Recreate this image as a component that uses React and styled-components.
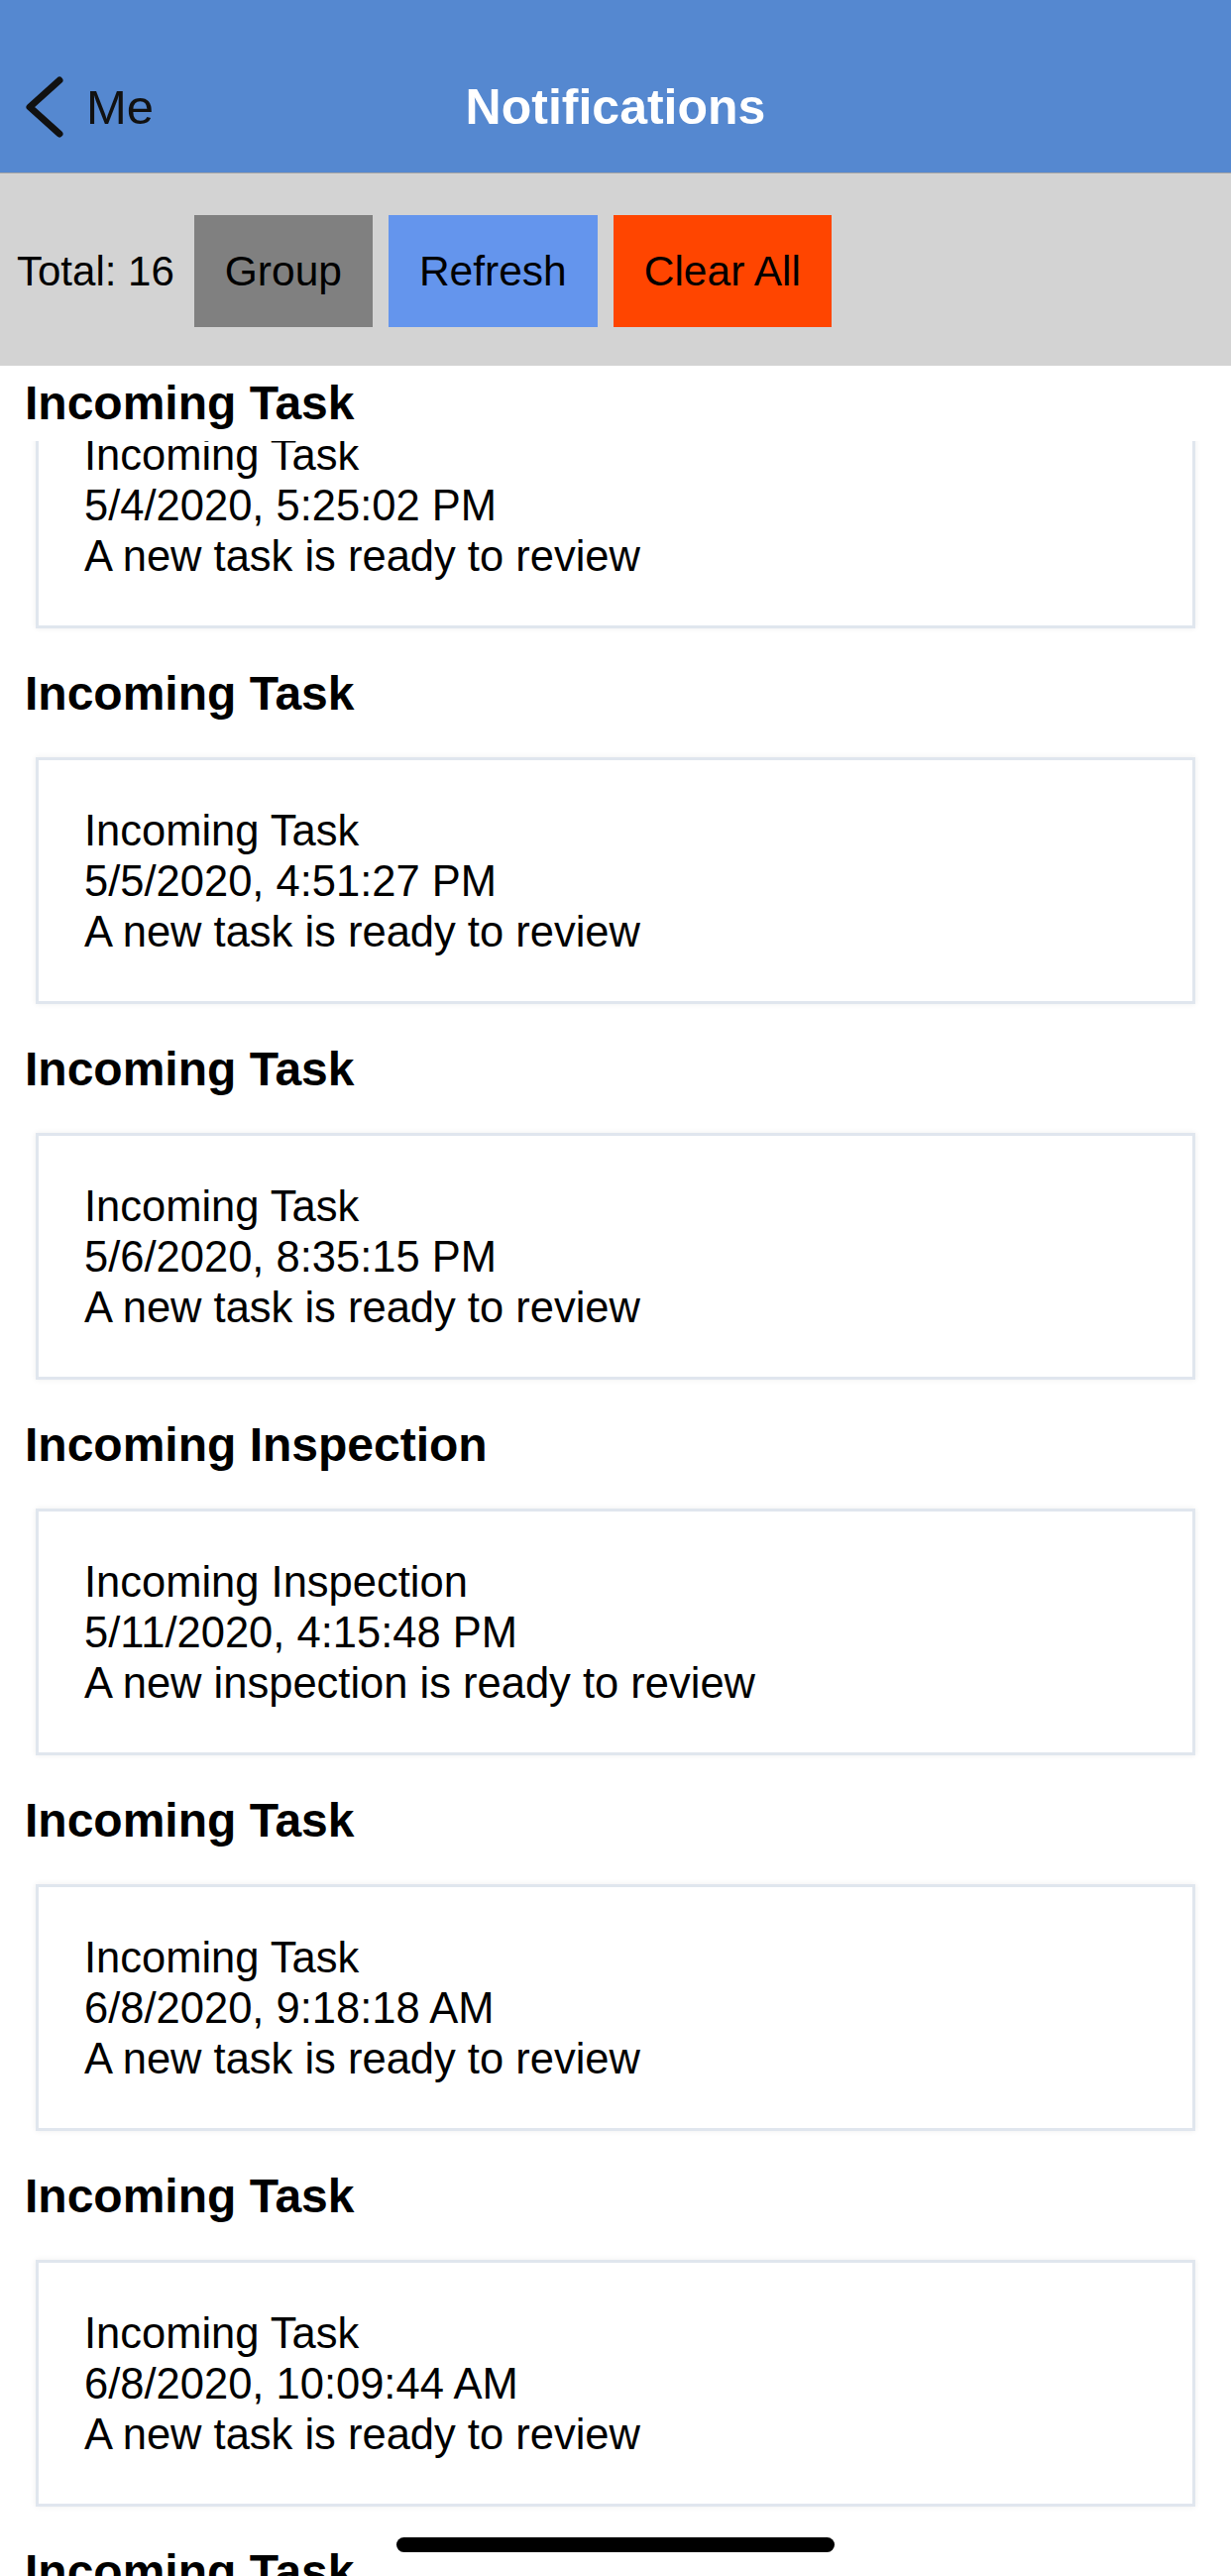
import React from 'react';
import styled, { createGlobalStyle } from 'styled-components';

const GlobalStyle = createGlobalStyle`
    html, body {
        margin: 0;
        padding: 0;
        overflow: hidden;
        background: #FFF;
        font-family: 'Liberation Sans', Arial, sans-serif;
    }

    * { box-sizing: border-box; }
`;

const notifications = [
    { title: 'Incoming Task', date: '5/5/2020, 4:51:27 PM', body: 'A new task is ready to review' },
    { title: 'Incoming Task', date: '5/6/2020, 8:35:15 PM', body: 'A new task is ready to review' },
    { title: 'Incoming Inspection', date: '5/11/2020, 4:15:48 PM', body: 'A new inspection is ready to review' },
    { title: 'Incoming Task', date: '6/8/2020, 9:18:18 AM', body: 'A new task is ready to review' },
    { title: 'Incoming Task', date: '6/8/2020, 10:09:44 AM', body: 'A new task is ready to review' },
];

function Chevron() {
    return (
        <svg width="42" height="64" viewBox="0 0 42 64">
            <path d="M36 5 L6 32 L36 59" fill="none" stroke="#111" strokeWidth="7" strokeLinecap="round" strokeLinejoin="round" />
        </svg>
    );
}

function NotificationCard({ item, offset }) {
    return (
        <Card $offset={offset}>
            <Line>{item.title}</Line>
            <Line>{item.date}</Line>
            <Line>{item.body}</Line>
        </Card>
    );
}

export default function App() {
    return (
        <Page>
            <GlobalStyle />
            <Header>
                <BackButton>
                    <Chevron />
                    <BackLabel>Me</BackLabel>
                </BackButton>
                <Title>Notifications</Title>
                <span />
            </Header>

            <Toolbar>
                <Total>Total: 16</Total>
                <ActionButton $bg="#808080">Group</ActionButton>
                <ActionButton $bg="#6495ED">Refresh</ActionButton>
                <ActionButton $bg="#FF4500">Clear All</ActionButton>
            </Toolbar>

            <List>
                <PinnedHeading>Incoming Task</PinnedHeading>
                <ScrolledOut>
                    <NotificationCard
                        offset={-60}
                        item={{ title: 'Incoming Task', date: '5/4/2020, 5:25:02 PM', body: 'A new task is ready to review' }}
                    />
                </ScrolledOut>

                {notifications.map((item, i) => (
                    <section key={i}>
                        <SectionHeading>{item.title}</SectionHeading>
                        <NotificationCard item={item} />
                    </section>
                ))}

                <SectionHeading>Incoming Task</SectionHeading>
            </List>

            <HomeIndicator />
        </Page>
    );
}

const Page = styled.div`
    position: relative;
    height: 100vh;
    overflow: hidden;
    display: flex;
    flex-direction: column;
`;

const Header = styled.header`
    height: 175px;
    padding-top: 42px;
    background-color: #5588D0;
    border-bottom: 1px solid #A4A4A4;
    display: grid;
    grid-template-columns: 1fr auto 1fr;
    align-items: center;
`;

const BackButton = styled.div`
    display: flex;
    align-items: center;
    gap: 21px;
    margin-left: 24px;
    margin-top: -1px;

    svg { display: block; }
`;

const BackLabel = styled.span`
    font-size: 49px;
    color: #111;
`;

const Title = styled.h1`
    margin: 0;
    font-size: 50px;
    font-weight: 700;
    color: #FFF;
`;

const Toolbar = styled.div`
    height: 194px;
    flex-shrink: 0;
    background-color: #D3D3D3;
    display: flex;
    align-items: center;
    padding: 3px 0 0 17px;
`;

const Total = styled.span`
    font-size: 42px;
    color: #000;
    margin-right: 20px;
`;

const ActionButton = styled.button`
    height: 113px;
    padding: 0 31px;
    margin-right: 16px;
    border: none;
    border-radius: 0;
    background-color: ${({ $bg }) => $bg};
    color: #000;
    font-family: inherit;
    font-size: 42.5px;
`;

const List = styled.div`
    flex: 1;
    overflow: hidden;
`;

const PinnedHeading = styled.h2`
    margin: 0;
    padding: 11px 25px;
    background: #FFF;
    font-size: 48px;
    line-height: 54px;
    font-weight: 700;
    color: #000;
    position: relative;
    z-index: 1;
`;

const ScrolledOut = styled.div`
    overflow: hidden;
    padding-bottom: 4px;
    margin-bottom: -4px;
`;

const SectionHeading = styled.h2`
    margin: 39px 0 37px;
    padding: 0 25px;
    font-size: 48px;
    line-height: 54px;
    font-weight: 700;
    color: #000;
`;

const Card = styled.div`
    margin: ${({ $offset }) => $offset || 0}px 36px 0;
    padding: 46px 46px 44px;
    background: #FFF;
    border: 3px solid #E0E6EE;
    box-shadow: 0 0 6px rgba(0, 0, 0, 0.07);
`;

const Line = styled.p`
    margin: 0;
    font-size: 43.5px;
    line-height: 51px;
    color: #000;
`;

const HomeIndicator = styled.div`
    position: absolute;
    left: 50%;
    bottom: 24px;
    width: 442px;
    height: 15px;
    margin-left: -221px;
    border-radius: 8px;
    background: #000;
`;
